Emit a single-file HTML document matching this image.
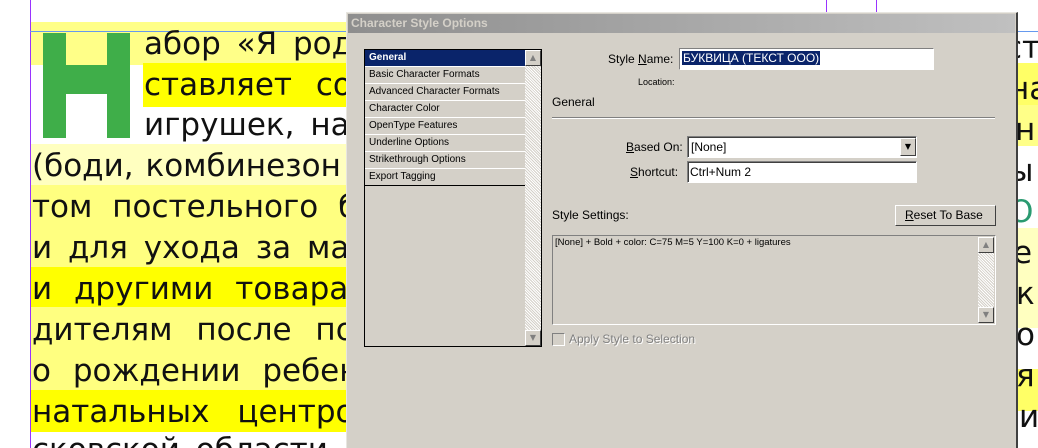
<!DOCTYPE html>
<html><head><meta charset="utf-8"><style>
*{margin:0;padding:0;box-sizing:border-box}
html,body{width:1038px;height:448px;overflow:hidden}
body{background:#fff;position:relative;font-family:"DejaVu Sans","Liberation Sans",sans-serif}
.abs{position:absolute}
.ln{position:absolute;left:32px;font-size:31px;color:#111;white-space:nowrap;line-height:41px;word-spacing:6px}
.d{font-family:"Liberation Sans",sans-serif;font-size:11px;color:#000}
.u{text-decoration:underline}
.item{position:absolute;left:1px;width:160px;height:17px;border-bottom:1px solid #fff;font-size:10px;padding:2px 0 0 4px;font-family:"Liberation Sans",sans-serif}
.hatch{background:repeating-linear-gradient(45deg,#d4d0c8 0 1px,#fff 1px 2px)}
</style></head><body>
<div class="abs" style="left:30px;top:22px;width:316px;height:43px;background:#ffff88"></div>
<div class="abs" style="left:143px;top:63px;width:203px;height:44px;background:#ffff00"></div>
<div class="abs" style="left:30px;top:144px;width:316px;height:41px;background:#ffffc0"></div>
<div class="abs" style="left:30px;top:185px;width:316px;height:82px;background:#ffff80"></div>
<div class="abs" style="left:30px;top:267px;width:316px;height:40px;background:#ffff00"></div>
<div class="abs" style="left:30px;top:307px;width:316px;height:83px;background:#ffff80"></div>
<div class="abs" style="left:30px;top:390px;width:316px;height:42px;background:#ffff00"></div>
<div class="abs" style="left:30px;top:0;width:1px;height:448px;background:#9933ff"></div>
<div class="abs" style="left:30px;top:31px;width:1008px;height:1px;background:#6699ee"></div>
<div class="abs" style="left:826px;top:0;width:1px;height:12px;background:#9933ff"></div>
<div class="abs" style="left:876px;top:0;width:1px;height:12px;background:#9933ff"></div>
<div class="abs" style="left:43px;top:33px;width:23px;height:105px;background:#3fae49"></div>
<div class="abs" style="left:107px;top:33px;width:23px;height:105px;background:#3fae49"></div>
<div class="abs" style="left:60px;top:65px;width:52px;height:29px;background:#3fae49"></div>
<div class="abs" style="left:0;top:0;width:346px;height:448px;overflow:hidden">
<div class="ln" style="left:144px;top:24px">абор «Я родился»</div>
<div class="ln" style="left:144px;top:65px;word-spacing:14px">ставляет собой</div>
<div class="ln" style="left:144px;top:105px">игрушек, набор</div>
<div class="ln" style="top:146px;word-spacing:2px">(боди, комбинезон</div>
<div class="ln" style="top:187px;word-spacing:10px">том постельного белья</div>
<div class="ln" style="top:228px">и для ухода за малышом</div>
<div class="ln" style="top:269px;word-spacing:12px">и другими товарами</div>
<div class="ln" style="top:310px;word-spacing:14px">дителям после получения</div>
<div class="ln" style="top:351px;word-spacing:12px">о рождении ребенка</div>
<div class="ln" style="top:392px;word-spacing:18px">натальных центров</div>
<div class="ln" style="top:430px">сковской области</div>
</div>
<div class="abs" style="left:1017px;top:63px;width:21px;height:42px;background:#ffff66"></div>
<div class="abs" style="left:1017px;top:105px;width:21px;height:41px;background:#ffff88"></div>
<div class="abs" style="left:1017px;top:228px;width:21px;height:100px;background:#ffffc0"></div>
<div class="abs" style="left:1017px;top:369px;width:21px;height:42px;background:#ffff66"></div>
<div class="abs" style="left:1017px;top:0;width:21px;height:448px;overflow:hidden">
<div class="ln" style="left:-12px;top:28px">ст</div>
<div class="ln" style="left:-8px;top:69px">на</div>
<div class="ln" style="left:-2px;top:110px">н</div>
<div class="ln" style="left:-8px;top:151px">ы</div>
<div class="ln" style="left:-8px;top:192px;color:#2a9a70">О</div>
<div class="ln" style="left:-4px;top:233px">е</div>
<div class="ln" style="left:-1px;top:274px">к</div>
<div class="ln" style="left:-1px;top:315px">о</div>
<div class="ln" style="left:-1px;top:356px">я</div>
<div class="ln" style="left:2px;top:397px">и</div>
</div>
<div class="abs" style="left:346px;top:12px;width:672px;height:436px;background:#d4d0c8;border-top:1px solid #e8e6e0;border-left:1px solid #e8e6e0;border-right:2px solid #404040"></div>
<div class="abs" style="left:348px;top:14px;width:667px;height:19px;background:linear-gradient(90deg,#8e8e8e,#c0c0c0)"></div>
<div class="abs d" style="left:351px;top:16px;font-weight:bold;font-size:12px;color:#d4d0c8">Character Style Options</div>
<div class="abs" style="left:364px;top:49px;width:178px;height:298px;background:#d4d0c8;border:1px solid #000"></div>
<div class="abs" style="left:364px;top:49px;width:162px;height:298px">
<div class="item" style="top:1px;background:#0a246a;color:#fff;font-weight:bold">General</div>
<div class="item" style="top:18px">Basic Character Formats</div>
<div class="item" style="top:35px">Advanced Character Formats</div>
<div class="item" style="top:52px">Character Color</div>
<div class="item" style="top:69px">OpenType Features</div>
<div class="item" style="top:86px">Underline Options</div>
<div class="item" style="top:103px">Strikethrough Options</div>
<div class="item" style="top:120px;border-bottom:1px solid #000">Export Tagging</div>
</div>
<div class="abs hatch" style="left:525px;top:50px;width:16px;height:296px"></div>
<div class="abs" style="left:525px;top:50px;width:16px;height:16px;background:#d4d0c8;border:1px solid;border-color:#fff #404040 #404040 #fff;font-size:8px;color:#808080;text-align:center;line-height:14px">▲</div>
<div class="abs" style="left:525px;top:330px;width:16px;height:16px;background:#d4d0c8;border:1px solid;border-color:#fff #404040 #404040 #fff;font-size:8px;color:#808080;text-align:center;line-height:14px">▼</div>
<div class="abs d" style="left:608px;top:52px;font-size:12px">Style <span class="u">N</span>ame:</div>
<div class="abs" style="left:679px;top:48px;width:255px;height:22px;background:#fff;border:1px solid;border-color:#808080 #fff #fff #808080"></div>
<div class="abs d" style="left:682px;top:51px;font-size:12px;background:#0a246a;color:#fff;padding:0 1px">БУКВИЦА (ТЕКСТ ООО)</div>
<div class="abs d" style="left:638px;top:77px;font-size:9px">Location:</div>
<div class="abs d" style="left:552px;top:95px;font-size:12px">General</div>
<div class="abs" style="left:552px;top:117px;width:443px;height:2px;border-top:1px solid #808080;border-bottom:1px solid #fff"></div>
<div class="abs d" style="left:626px;top:140px;font-size:12px"><span class="u">B</span>ased On:</div>
<div class="abs" style="left:687px;top:136px;width:230px;height:22px;background:#fff;border:1px solid;border-color:#808080 #fff #fff #808080;box-shadow:inset 1px 1px 0 #404040"></div>
<div class="abs d" style="left:691px;top:140px;font-size:12px">[None]</div>
<div class="abs" style="left:900px;top:138px;width:16px;height:18px;background:#d4d0c8;border:1px solid;border-color:#fff #404040 #404040 #fff;font-size:8px;text-align:center;line-height:16px">▼</div>
<div class="abs d" style="left:630px;top:165px;font-size:12px"><span class="u">S</span>hortcut:</div>
<div class="abs" style="left:687px;top:161px;width:230px;height:22px;background:#fff;border:1px solid;border-color:#808080 #fff #fff #808080;box-shadow:inset 1px 1px 0 #404040"></div>
<div class="abs d" style="left:690px;top:165px;font-size:12px">Ctrl+Num 2</div>
<div class="abs d" style="left:552px;top:208px;font-size:12px">Style Settings:</div>
<div class="abs" style="left:895px;top:205px;width:101px;height:21px;background:#d4d0c8;border:1px solid;border-color:#fff #404040 #404040 #fff"></div>
<div class="abs d" style="left:905px;top:208px;font-size:12px"><span class="u">R</span>eset To Base</div>
<div class="abs" style="left:552px;top:235px;width:444px;height:90px;border:1px solid;border-color:#808080 #fff #fff #808080"></div>
<div class="abs d" style="left:555px;top:237px;font-size:9.5px">[None] + Bold + color: C=75 M=5 Y=100 K=0 + ligatures</div>
<div class="abs hatch" style="left:978px;top:237px;width:16px;height:86px"></div>
<div class="abs" style="left:978px;top:237px;width:16px;height:16px;background:#d4d0c8;border:1px solid;border-color:#fff #404040 #404040 #fff;font-size:8px;color:#808080;text-align:center;line-height:14px">▲</div>
<div class="abs" style="left:978px;top:307px;width:16px;height:16px;background:#d4d0c8;border:1px solid;border-color:#fff #404040 #404040 #fff;font-size:8px;color:#808080;text-align:center;line-height:14px">▼</div>
<div class="abs" style="left:552px;top:333px;width:13px;height:13px;border:1px solid;border-color:#808080 #fff #fff #808080"></div>
<div class="abs d" style="left:569px;top:332px;font-size:12px;color:#808080;text-shadow:1px 1px 0 #fff">Apply Style to Selection</div>
</body></html>
